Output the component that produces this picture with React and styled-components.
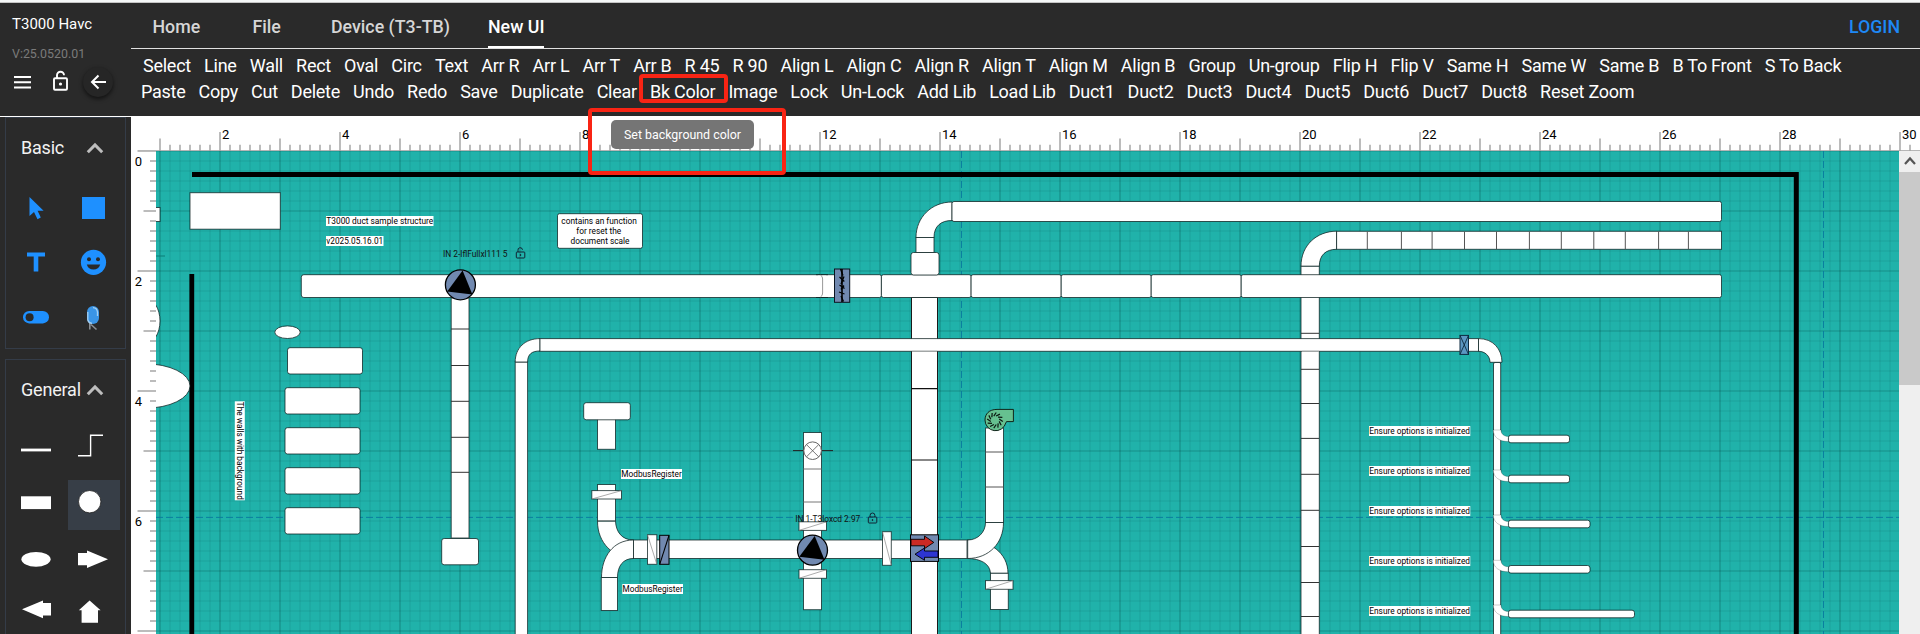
import React from "react";
import styled, { createGlobalStyle } from "styled-components";

const GlobalStyle = createGlobalStyle`
  * { box-sizing: border-box; }
  html, body { margin: 0; padding: 0; overflow: hidden; background: #fff; }
  body { font-family: Roboto, "Liberation Sans", sans-serif; }
`;

const Page = styled.div`
  position: relative;
  width: 1920px;
  height: 634px;
  overflow: hidden;
  display: flex;
  flex-direction: column;
  background: #fff;
`;
const Header = styled.header`
  flex: none;
  height: 116px;
  display: flex;
  background: #2a2a2a;
  border-top: 2px solid #f5f7f7;
  box-shadow: inset 0 1px 0 #c4c4c4;
`;
const Brand = styled.div`
  width: 131px;
  padding: 8px 0 0 12px;
  flex: none;
`;
const BrandName = styled.div`
  color: #fff;
  font-size: 15px;
  line-height: 28px;
`;
const Version = styled.div`
  color: #7a7a7a;
  font-size: 12.4px;
  line-height: 20px;
  margin-top: 6px;
`;
const BrandTools = styled.div`
  display: flex;
  align-items: center;
  height: 32px;
  margin-top: 2px;
`;
const MenuIcon = styled.svg`
  width: 20px;
  height: 20px;
`;
const LockIcon = styled.svg`
  width: 20px;
  height: 22px;
  margin: 0 0 2px 18px;
`;
const BackButton = styled.div`
  width: 30px;
  height: 30px;
  margin-left: 13px;
  border-radius: 50%;
  background: #262626;
  box-shadow: 0 2px 4px rgba(0, 0, 0, 0.6);
  display: grid;
  place-items: center;
`;
const HeaderMain = styled.div`
  flex: 1;
  min-width: 0;
`;
const TabBar = styled.nav`
  height: 47px;
  display: flex;
  align-items: flex-end;
  border-bottom: 1px solid #e0e0e0;
  padding: 0 20px 0 21.5px;
`;
const Tab = styled.div`
  height: 45px;
  width: ${(p) => p.$w}px;
  margin-right: ${(p) => p.$gap}px;
  line-height: 47px;
  font-size: 17.8px;
  font-weight: 500;
  white-space: nowrap;
  color: ${(p) => (p.$active ? "#fff" : "#d6d6d6")};
  border-bottom: 2px solid ${(p) => (p.$active ? "#fff" : "transparent")};
`;
const Login = styled.div`
  height: 45px;
  margin-left: auto;
  line-height: 47px;
  font-size: 17.8px;
  font-weight: 500;
  color: #1e88f5;
`;
const CommandRow = styled.div`
  display: flex;
  gap: ${(p) => p.$gap}px;
  height: 26px;
  line-height: 26px;
  padding-left: ${(p) => p.$left}px;
  margin-top: ${(p) => p.$top || 0}px;
`;
const Command = styled.span`
  color: #fff;
  font-size: 18px;
  letter-spacing: -0.25px;
  white-space: nowrap;
`;
const Body = styled.div`
  flex: 1;
  display: flex;
  min-height: 0;
`;
const Sidebar = styled.aside`
  width: 131px;
  flex: none;
  margin-top: 1px;
  padding: 0 5px;
  background: #2a2a2a;
  overflow: hidden;
`;
const Panel = styled.section`
  width: 121px;
  height: ${(p) => p.$h}px;
  margin-bottom: 10px;
  border: 1px solid #343c48;
  padding: ${(p) => p.$top}px 0 0 5px;
`;
const PanelHead = styled.div`
  display: flex;
  align-items: center;
  height: 28px;
  padding-left: 10px;
  color: #f2f2f2;
  font-size: 18px;
  line-height: 28px;
`;
const PanelTitle = styled.span`
  width: 65px;
  white-space: nowrap;
  letter-spacing: -0.2px;
`;
const ToolGrid = styled.div`
  display: grid;
  grid-template-columns: 57px 52px;
  grid-auto-rows: ${(p) => p.$row}px;
  margin-top: ${(p) => p.$top}px;
`;
const ToolCell = styled.div`
  background: ${(p) => (p.$on ? "#373e47" : "transparent")};
`;
const ToolSvg = styled.svg`
  display: block;
  overflow: visible;
`;
const Workspace = styled.main`
  flex: 1;
  min-width: 0;
`;
const TopRuler = styled.svg`
  display: block;
  width: 1789px;
  height: 35px;
`;
const CanvasRow = styled.div`
  display: flex;
  height: 483px;
`;
const LeftRuler = styled.svg`
  width: 25px;
  height: 483px;
  flex: none;
`;
const Canvas = styled.svg`
  width: 1743px;
  height: 483px;
  flex: none;
  background: #20b2aa;
`;
const Scrollbar = styled.div`
  width: 21px;
  background: #efefef;
`;
const ScrollUp = styled.svg`
  display: block;
  width: 21px;
  height: 21px;
`;
const Thumb = styled.div`
  height: 213px;
  background: #c9c9c9;
`;
const RedFrame = styled.div`
  position: absolute;
  left: ${(p) => p.$x}px;
  top: ${(p) => p.$y}px;
  width: ${(p) => p.$w}px;
  height: ${(p) => p.$h}px;
  border: 4px solid #f92414;
  border-radius: 4px;
`;
const Tooltip = styled.div`
  position: absolute;
  left: 611px;
  top: 120px;
  width: 143px;
  height: 29px;
  border-radius: 5px;
  background: #757575;
  color: #fff;
  font-size: 12.4px;
  line-height: 29px;
  text-align: center;
  white-space: nowrap;
`;

const ROW_ONE = ["Select", "Line", "Wall", "Rect", "Oval", "Circ", "Text", "Arr R", "Arr L", "Arr T", "Arr B", "R 45", "R 90", "Align L", "Align C", "Align R", "Align T", "Align M", "Align B", "Group", "Un-group", "Flip H", "Flip V", "Same H", "Same W", "Same B", "B To Front", "S To Back"];
const ROW_TWO = ["Paste", "Copy", "Cut", "Delete", "Undo", "Redo", "Save", "Duplicate", "Clear", "Bk Color", "Image", "Lock", "Un-Lock", "Add Lib", "Load Lib", "Duct1", "Duct2", "Duct3", "Duct4", "Duct5", "Duct6", "Duct7", "Duct8", "Reset Zoom"];

const BLUE = "#1e90ff";
const STEEL = "#7189b0";
const EDGE = "rgba(10,30,30,0.75)";
const range = (from, to, step) => {
  const out = [];
  for (let v = from; v <= to; v += step) out.push(v);
  return out;
};

/* Ruler ticks: 10px steps, a unit every 60px, a label every two units. */
function HorizontalRuler() {
  return (
    <TopRuler viewBox="131 116 1789 35">
      <path d="M137.5 150.7H1920" stroke="#a6a6a6" />
      {range(160, 1910, 10).map((x) => {
        const unit = (x - 100) % 60 === 0;
        const even = (x - 100) % 120 === 0;
        return <path key={x} d={`M${x} ${even ? 132 : unit ? 138.5 : 144.7}V151`} stroke="#a6a6a6" strokeWidth="1.5" />;
      })}
      {range(220, 1900, 120)
        .filter((x) => x !== 700) /* covered by the tooltip */
        .map((x) => (
          <text key={x} x={x + 2} y="139.2" fontSize="13" fill="#000">{(x - 100) / 60}</text>
        ))}
    </TopRuler>
  );
}

function VerticalRuler() {
  return (
    <LeftRuler viewBox="131 151 25 483">
      {range(151, 634, 10).map((y) => {
        const unit = (y - 151) % 60 === 0;
        const even = (y - 151) % 120 === 0;
        return <path key={y} d={`M${even ? 137.5 : unit ? 143.5 : 150} ${y}H156`} stroke="#a6a6a6" strokeWidth="1.5" />;
      })}
      {[0, 2, 4, 6].map((n) => (
        <text key={n} x="134.7" y={165.7 + n * 60} fontSize="13" fill="#000">{n}</text>
      ))}
    </LeftRuler>
  );
}

const Box = ({ x, y, x2, y2, r = 0, fill = "#fff", ...rest }) => (
  <rect x={x} y={y} width={x2 - x} height={y2 - y} rx={r} fill={fill} stroke={EDGE} {...rest} />
);
const Tag = ({ x, x2, y, children }) => (
  <g>
    <rect x={x} y={y - 8} width={x2 - x} height="10" fill="#fff" />
    <text x={x + 0.3} y={y - 0.2} textLength={x2 - x - 0.6} lengthAdjust="spacingAndGlyphs">{children}</text>
  </g>
);
const Damper = ({ x, y, x2, y2, fill = "#fff", rise }) => (
  <g>
    <Box x={x} y={y} x2={x2} y2={y2} fill={fill} stroke={fill === "#fff" ? EDGE : "#000"} />
    <path d={rise ? `M${x} ${y2}L${x2} ${y}` : `M${x} ${y}L${x2} ${y2}`} stroke={fill === "#fff" ? "#888" : "#000"} strokeWidth={fill === "#fff" ? 0.7 : 1.1} />
  </g>
);
const Pump = ({ x, y }) => (
  <g transform={`translate(${x} ${y})`}>
    <circle r="15" fill={STEEL} stroke="#000" strokeWidth="1.3" />
    <path d="M2.2 -14.2L-13.2 6.6L12 9.6Z" fill="#000" />
  </g>
);
const Padlock = ({ x, y, open }) => (
  <g transform={`translate(${x} ${y})`} fill="none" stroke="#123" strokeWidth="1">
    <rect x="0.5" y="4" width="8.5" height="6" rx="0.8" />
    <path d={open ? "M2.2 4V2.4A2 2 0 0 1 6.6 1.5V2" : "M2.3 4V2.4A2.4 2.4 0 0 1 7.1 2.4V4"} />
    <circle cx="4.7" cy="7" r="0.5" fill="#123" />
  </g>
);
const Elbow = ({ d }) => <path d={d} fill="#fff" stroke={EDGE} />;
const Seams = ({ d, c = "#333", w = 1 }) => <path d={d} stroke={c} strokeWidth={w} fill="none" />;

/* centre y of the duct, its right end, baseline of its label */
const BRANCHES = [
  [439, 1569.5, 434],
  [479, 1569.5, 474],
  [524, 1590, 514],
  [569.3, 1590, 564],
  [614, 1634.5, 614],
];

function DuctDiagram() {
  return (
    <Canvas viewBox="156 151 1743 483" fontSize="8.4" fill="#000">
      <path d={range(160, 1890, 10).filter((x) => (x - 160) % 60).map((x) => `M${x} 151V634`).join("")} stroke="rgba(0,60,60,0.13)" />
      <path d={range(161, 631, 10).filter((y) => (y - 151) % 60).map((y) => `M156 ${y}H1899`).join("")} stroke="rgba(0,60,60,0.13)" />
      <path d={range(160, 1890, 60).map((x) => `M${x} 151V634`).join("")} stroke="rgba(0,60,60,0.3)" strokeWidth="1.2" />
      <path d={range(151, 631, 60).map((y) => `M156 ${y}H1899`).join("")} stroke="rgba(0,60,60,0.3)" strokeWidth="1.2" />
      <path d="M156 517.4H1899M961.5 151V634M1823.5 151V634" stroke="#08799e" strokeDasharray="7 3" strokeWidth="0.9" />
      <path d="M156 256H165" stroke="#0b7d76" />

      {/* building walls */}
      <path d="M192 174.6H1796.3V634" stroke="#000" strokeWidth="5" fill="none" />
      <path d="M191.8 274V634" stroke="#000" strokeWidth="4.8" />

      <Box x={190} y={192.7} x2={280.3} y2={229.2} />
      <Box x={150} y={207.5} x2={160} y2={221.5} />
      <ellipse cx="145" cy="321" rx="15" ry="23" fill="#fff" stroke={EDGE} />
      <ellipse cx="145" cy="386" rx="45" ry="22.2" fill="#fff" stroke={EDGE} />
      <ellipse cx="287.5" cy="332.2" rx="12.7" ry="6.3" fill="#fff" stroke={EDGE} />
      <Box x={287.5} y={347.7} x2={362.5} y2={374} r={2.5} />
      {[387.7, 427.7, 467.7, 507.7].map((y) => (
        <Box key={y} x={285} y={y} x2={360} y2={y + 26.3} r={2.5} />
      ))}
      <g transform="translate(237.3 401.3) rotate(90)">
        <rect x="0" y="-7.5" width="99" height="10" fill="#fff" />
        <text x="0.5" y="0" textLength="98" lengthAdjust="spacingAndGlyphs">The walls with background</text>
      </g>
      <Tag x={326} x2={433.5} y={224}>T3000 duct sample structure</Tag>
      <Tag x={326} x2={383.5} y={244}>v2025.05.16.01</Tag>
      <Box x={557.5} y={213.7} x2={642.5} y2={248.3} r={2} />
      <text x="561.3" y="223.9" textLength="75.5" lengthAdjust="spacingAndGlyphs">contains an function</text>
      <text x="576.3" y="233.9" textLength="45" lengthAdjust="spacingAndGlyphs">for reset the</text>
      <text x="570.5" y="243.9" textLength="59" lengthAdjust="spacingAndGlyphs">document scale</text>
      <text x="443" y="257" textLength="64.5" lengthAdjust="spacingAndGlyphs" fill="#111">IN 2-lflFullxl111 5</text>
      <Padlock x={515.8} y={248} open />

      {/* left riser */}
      <Box x={451.2} y={298} x2={469} y2={538} />
      <Seams d="M451 329H469M451 365.5H469M451 401.3H469M451 437.3H469M451 472.3H469" />
      <Box x={441.7} y={538.5} x2={478.5} y2={564.8} r={2.5} />

      {/* large central riser */}
      <Box x={911.5} y={297.5} x2={937.5} y2={640} stroke="#1a1a1a" />
      <Seams d="M911 388.7H938M911 460H938" c="#111" w={1.2} />

      {/* supply ducts, top right */}
      <Elbow d="M916 237.5C916 217 932 202 952 202V220.5C941 220.5 934 226 934 237.5Z" />
      <Box x={916} y={237.5} x2={934} y2={252.5} />
      <Box x={952} y={201.5} x2={1721.5} y2={221.5} r={2} />
      <Elbow d="M1301 266.3C1301 245 1317 231.2 1336.6 231.2V249.3C1326 249.3 1319.3 255 1319.3 266.3Z" />
      <Box x={1301} y={266.3} x2={1319.3} y2={640} />
      <Seams d="M1301 333.3H1319M1301 369.3H1319M1301 403.5H1319M1301 438.4H1319M1301 474.3H1319M1301 510.3H1319M1301 546.5H1319M1301 582.5H1319M1301 616.5H1319" />
      <Box x={1336.6} y={231.3} x2={1721.5} y2={249.3} />
      <Seams d={[1367.3, 1401.4, 1432.1, 1464.5, 1496.5, 1529.4, 1561.3, 1593.8, 1625.3, 1658.6, 1688.4].map((x) => `M${x} 231.5V249.3`).join("")} c="#555" />

      {/* main trunk */}
      <Box x={820} y={274.7} x2={881.4} y2={297.5} r={2} />
      <Box x={301.3} y={274.7} x2={822.5} y2={297.5} r={2.5} />
      <path d="M818 275.2H826V297H818Z" fill="#fff" />
      <path d="M816 274.7H828M816 297.5H828" stroke={EDGE} />
      <path d="M820.6 275.3Q822.6 276 822.6 279V293Q822.6 296 820.6 296.7" stroke="#999" fill="none" />
      {[[881.4, 971.1], [971.1, 1061.2], [1061.2, 1151.2], [1151.2, 1241.2], [1241.2, 1721.5]].map(([a, b]) => (
        <Box key={a} x={a} y={274.7} x2={b} y2={297.5} r={2} />
      ))}
      <Box x={911} y={252.5} x2={939} y2={275} r={2.5} />
      <Box x={834.5} y={269} x2={849.7} y2={302.3} fill={STEEL} stroke="#0b1420" />
      <path d="M842 269V302" stroke="#000" strokeWidth="1.6" />
      <path d="M840.5 269L843 275.5M839.5 277L844.3 281.5M839.5 285L844.5 288.5M839 292L844.5 294M841 296L843.5 301.5M844 276.5L841 284M841 289.5L844 285.5" stroke="#000" strokeWidth="1.3" />
      <Pump x={460.4} y={284.8} />

      {/* return loop */}
      <Box x={515.2} y={362} x2={527.6} y2={640} />
      <Elbow d="M515.2 362C515.2 348 525 338.6 540 338.6V351C532 351 527.6 354 527.6 362Z" />
      <Box x={1493.5} y={362.5} x2={1500.7} y2={640} r={1.5} />
      <Box x={540} y={338.6} x2={1478.5} y2={351.3} />
      <path d="M912 351.2H937M1302 351.2H1319" stroke="#bbb" />
      <Elbow d="M1478.5 338.6C1493 338.6 1502 349 1502 362.3H1490C1490 356 1485 351.3 1478.5 351.3Z" />
      <Box x={1460} y={335.4} x2={1468.5} y2={354.4} fill="#5b97c2" stroke="#0c2a40" />
      <path d="M1460 335.4L1468.5 354.4M1468.5 335.4L1460 354.4" stroke="#0c2a40" strokeWidth="0.9" />

      {/* diffuser */}
      <Box x={597.5} y={418} x2={615.5} y2={449.3} />
      <Box x={583.7} y={402.7} x2={630.3} y2={419.8} r={2.5} />

      {/* left branch */}
      <Box x={597.5} y={484.5} x2={615.5} y2={521} />
      <Damper x={591.8} y={490.6} x2={621.5} y2={499} rise />
      <Elbow d="M597.5 521.2H615.5C616 532 622 540 633.5 540V558.5C613 558 597.5 543 597.5 521.2Z" />
      <Box x={601.3} y={577.5} x2={617.5} y2={610.5} />
      <Elbow d="M601.5 577.5C601.5 557 613 540 633.5 540V558.5C623 558.5 617.5 566 617.5 577.5Z" />
      <Tag x={621} x2={682} y={477}>ModbusRegister</Tag>
      <Tag x={622.3} x2={683} y={592}>ModbusRegister</Tag>

      <Elbow d="M967 540C990 540 1008 553 1008 573.3H990.5C990 564 981 558.5 967 558.5Z" />
      <Box x={633.5} y={540} x2={967} y2={558.5} />

      {/* middle riser */}
      <path d="M793 450.6H833" stroke="#222" />
      <Box x={803.5} y={432.5} x2={821.5} y2={540} />
      <Seams d="M803.5 469H821.5M803.5 502H821.5" c="#777" />
      <Box x={803.5} y={558.5} x2={821.5} y2={609.7} />
      <path d="M804 540H821.5M804 558.5H821.5" stroke="#fff" strokeWidth="2" />
      <circle cx="812.6" cy="450.7" r="8.8" fill="#fff" stroke="#666" />
      <path d="M806.4 444.5L818.8 456.9M818.8 444.5L806.4 456.9" stroke="#555" strokeWidth="0.8" />
      <Damper x={799} y={521.8} x2={826.5} y2={530.4} rise />
      <Damper x={799} y={569.7} x2={826.5} y2={578.3} rise />
      <text x="795.3" y="522.2" textLength="65" lengthAdjust="spacingAndGlyphs" fill="#111">IN 1-T3loxcd 2.97</text>
      <Padlock x={867.8} y={513} />
      <Pump x={812.5} y={550.2} />
      <Damper x={647.5} y={534.7} x2={656.8} y2={564.3} />
      <Damper x={659.7} y={535.3} x2={669} y2={564.3} fill={STEEL} rise />
      <Damper x={882.5} y={531.7} x2={891.3} y2={565.3} />

      {/* heat exchanger */}
      <Box x={910.5} y={534.8} x2={938.5} y2={561.4} fill={STEEL} stroke="#000" />
      <path d="M911 539.3H924.5V536L933.8 542.4L924.5 548.6V545.8H911Z" fill="#cc2a24" stroke="#000" strokeWidth="0.9" />
      <path d="M938 551H924.5V548L915 554.2L924.5 560.3V557.3H938Z" fill="#2d35d2" stroke="#000" strokeWidth="0.9" />

      {/* right branch and blower */}
      <Elbow d="M967.7 540C978 540 985.5 532 985.5 522.5H1003.5C1003.5 543 989 558.5 967.7 558.5Z" />
      <Box x={985.5} y={428} x2={1003.5} y2={522.5} />
      <Seams d="M985.5 452H1003.5M985.5 487H1003.5" c="#555" />
      <Box x={990.5} y={573.3} x2={1008.3} y2={609.5} />
      <Damper x={985.5} y={580.6} x2={1013} y2={589.3} rise />
      <path d="M1013.4 409.4H997C989 409.4 985 414 985 420A10.6 10.6 0 0 0 1005.8 423L1006.5 421.6H1013.4Z" fill="#66c190" stroke="#10261a" />
      <g transform="translate(995 420.3)" stroke="#0a160f" strokeWidth="1.2">
        {range(0, 330, 30).map((a) => (
          <path key={a} d="M4.2 -1.2L7.8 1.2" transform={`rotate(${a})`} />
        ))}
      </g>

      {/* terminal branches */}
      {BRANCHES.map(([y, end, label]) => (
        <g key={y}>
          <path d={`M1493.3 ${y - 9}H1501C1501 ${y - 5} 1504 ${y - 2.5} 1508.5 ${y - 2.5}V${y + 2.5}C1499 ${y + 2.5} 1493.3 ${y - 2} 1493.3 ${y - 9}Z`} fill="#fff" stroke="rgba(0,0,0,0.25)" strokeWidth="0.8" />
          <Box x={1508.4} y={y - 3.8} x2={end} y2={y + 3.8} r={2.5} />
          <Tag x={1369} x2={1470.3} y={label}>Ensure options is initialized</Tag>
        </g>
      ))}
    </Canvas>
  );
}

const BASIC_TOOLS = [
  <path d="M18.5 7V26L23 22L26.5 29.2L29.8 27.6L26.6 20.8H32.6Z" />,
  <rect x="14" y="7" width="23" height="22" />,
  <path d="M16 7.5H34V11.5H27.3V26.5H22.7V11.5H16Z" />,
  <g><circle cx="25.5" cy="17.3" r="12.6" /><g fill="#2a2a2a"><circle cx="21" cy="14.3" r="2" /><circle cx="30" cy="14.3" r="2" /><path d="M18.8 19.6H32.2A7 7 0 0 1 18.8 19.6Z" /></g></g>,
  <g><rect x="12" y="11" width="26" height="12.4" rx="6.2" /><circle cx="18.6" cy="17.2" r="4" fill="#2a2a2a" /></g>,
  <g><path d="M21.8 22V29.5M23 24.5L28.5 29.5" stroke="#8a8f94" strokeWidth="1.6" fill="none" /><rect x="19" y="6" width="12" height="18" rx="6" fill="#3a95e6" /><path d="M19.8 12V20Q20.5 23 24 23.3M25 7.6Q29 7.8 29.5 12V16" stroke="#a4cff2" strokeWidth="1.3" fill="none" /></g>,
];
const GENERAL_TOOLS = [
  <rect x="10" y="18.6" width="30" height="2.8" />,
  <path d="M10 25.8H22.6V5.2H35" fill="none" stroke="#fff" strokeWidth="1.4" />,
  <rect x="10" y="16.3" width="30" height="12.8" />,
  <circle cx="21.7" cy="21.7" r="11.2" stroke="#1c1c1c" strokeWidth="0.8" />,
  <ellipse cx="25" cy="29.3" rx="14.6" ry="7.4" />,
  <path d="M10 23H19V20.6L40 29.2L19 38V35.3H10Z" />,
  <path d="M11 29.3L32 20.6V23H40V35.6H32V38.2Z" />,
  <path d="M21.6 20.5L32.6 30.2H30V42.8H13.6V30.2H10.8Z" />,
];

const Chevron = () => (
  <ToolSvg width="18" height="14" viewBox="0 0 18 14">
    <path d="M1.8 11.3L9 4L16.2 11.3" stroke="#bdbdbd" strokeWidth="3" fill="none" />
  </ToolSvg>
);

export default function App() {
  return (
    <>
      <GlobalStyle />
      <Page>
        <Header>
          <Brand>
            <BrandName>T3000 Havc</BrandName>
            <Version>V:25.0520.01</Version>
            <BrandTools>
              <MenuIcon viewBox="0 0 20 20"><path d="M2 5H19M2 10.2H19M2 15.4H19" stroke="#fff" strokeWidth="2" /></MenuIcon>
              <LockIcon viewBox="0 0 20 22" fill="none" stroke="#fff" strokeWidth="1.9">
                <rect x="4" y="8.3" width="13" height="11.5" rx="1" />
                <path d="M7 8V5.2A3.5 3.5 0 0 1 14 5.2" />
                <circle cx="10.5" cy="14" r="1.6" fill="#fff" stroke="none" />
              </LockIcon>
              <BackButton>
                <ToolSvg width="18" height="18" viewBox="0 0 18 18"><path d="M17 9H3M9.5 2.5L3 9L9.5 15.5" fill="none" stroke="#fff" strokeWidth="2" /></ToolSvg>
              </BackButton>
            </BrandTools>
          </Brand>
          <HeaderMain>
            <TabBar>
              <Tab $w={49} $gap={51}>Home</Tab>
              <Tab $w={29} $gap={49.5}>File</Tab>
              <Tab $w={118} $gap={39}>Device (T3-TB)</Tab>
              <Tab $w={56} $gap={0} $active>New UI</Tab>
              <Login>LOGIN</Login>
            </TabBar>
            <CommandRow $gap={13.1} $left={12} $top={4}>{ROW_ONE.map((t) => <Command key={t}>{t}</Command>)}</CommandRow>
            <CommandRow $gap={13} $left={10}>{ROW_TWO.map((t) => <Command key={t}>{t}</Command>)}</CommandRow>
          </HeaderMain>
        </Header>
        <Body>
          <Sidebar>
            <Panel $h={232} $top={16}>
              <PanelHead><PanelTitle>Basic</PanelTitle><Chevron /></PanelHead>
              <ToolGrid $row={55} $top={28}>
                {BASIC_TOOLS.map((icon, i) => (
                  <ToolCell key={i}><ToolSvg width="50" height="40" fill={BLUE}>{icon}</ToolSvg></ToolCell>
                ))}
              </ToolGrid>
            </Panel>
            <Panel $h={300} $top={16}>
              <PanelHead><PanelTitle>General</PanelTitle><Chevron /></PanelHead>
              <ToolGrid $row={50} $top={26}>
                {GENERAL_TOOLS.map((icon, i) => (
                  <ToolCell key={i} $on={i === 3}><ToolSvg width="50" height="44" fill="#fff">{icon}</ToolSvg></ToolCell>
                ))}
              </ToolGrid>
            </Panel>
          </Sidebar>
          <Workspace>
            <HorizontalRuler />
            <CanvasRow>
              <VerticalRuler />
              <DuctDiagram />
              <Scrollbar>
                <ScrollUp viewBox="0 0 21 21"><path d="M6 13L11 7.5L16 13" fill="none" stroke="#555" strokeWidth="2.2" /></ScrollUp>
                <Thumb />
              </Scrollbar>
            </CanvasRow>
          </Workspace>
        </Body>
        <RedFrame $x={639} $y={74} $w={89} $h={29} />
        <RedFrame $x={588} $y={108} $w={198} $h={67} />
        <Tooltip>Set background color</Tooltip>
      </Page>
    </>
  );
}
